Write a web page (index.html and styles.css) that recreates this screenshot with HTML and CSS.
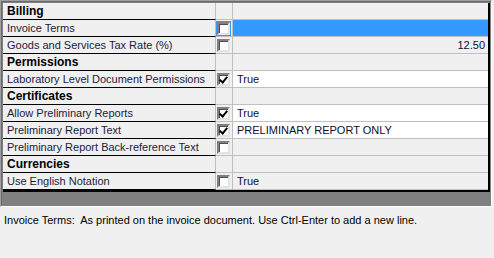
FILE: index.html
```html
<!DOCTYPE html>
<html lang="en">
<head>
    <meta charset="UTF-8">
    <title>Options</title>
    <link rel="stylesheet" href="styles.css">
</head>
<body>
    <div class="panel">
        <div class="grid">
            <div class="label head">Billing</div><div class="check"></div><div class="value"></div>

            <div class="label">Invoice Terms</div>
            <div class="check sel"><span class="box"></span></div>
            <div class="value selected"></div>

            <div class="label">Goods and Services Tax Rate (%)</div>
            <div class="check"><span class="box"></span></div>
            <div class="value num">12.50</div>

            <div class="label head">Permissions</div><div class="check"></div><div class="value"></div>

            <div class="label">Laboratory Level Document Permissions</div>
            <div class="check"><span class="box on"></span></div>
            <div class="value set">True</div>

            <div class="label head">Certificates</div><div class="check"></div><div class="value"></div>

            <div class="label">Allow Preliminary Reports</div>
            <div class="check"><span class="box on"></span></div>
            <div class="value set">True</div>

            <div class="label">Preliminary Report Text</div>
            <div class="check"><span class="box on"></span></div>
            <div class="value set">PRELIMINARY REPORT ONLY</div>

            <div class="label">Preliminary Report Back-reference Text</div>
            <div class="check"><span class="box"></span></div>
            <div class="value"></div>

            <div class="label head">Currencies</div><div class="check"></div><div class="value"></div>

            <div class="label">Use English Notation</div>
            <div class="check"><span class="box"></span></div>
            <div class="value">True</div>
        </div>
    </div>
    <div class="status">Invoice Terms:&nbsp; As printed on the invoice document. Use Ctrl-Enter to add a new line.</div>
</body>
</html>
```

FILE: styles.css
```css
body {
    margin: 0;
    background-color: #f0f0f0;
    font-family: 'Liberation Sans', Arial, sans-serif;
    font-size: 11px;
    color: #000;
}
.panel {
    width: 488px;
    height: 203px;
    background-color: #808080;
    border-top: 1px solid #a0a0a0;
    border-left: 1px solid #a0a0a0;
    border-right: 1px solid #fff;
    border-bottom: 1px solid #fff;
    box-shadow: inset 1px 1px 0 #696969;
    padding: 2px 0 0 2px;
    box-sizing: content-box;
}
.grid {
    display: grid;
    grid-template-columns: 213px 17px 1fr;
    grid-auto-rows: 17px;
    width: 487px;
    background-color: #f0f0f0;
    border-right: 2px solid #000;
    border-bottom: 2px solid #000;
    box-sizing: border-box;
}
.label {
    display: flex;
    align-items: center;
    padding-left: 4px;
    color: #1b1b3a;
    border-bottom: 1px solid #000;
    border-right: 1px solid #c0c0c0;
    white-space: nowrap;
}
.label.head {
    font-weight: bold;
    font-size: 12px;
    color: #000;
}
.check {
    display: flex;
    align-items: center;
    padding-left: 1px;
    border-bottom: 1px solid #c0c0c0;
    border-right: 1px solid #c0c0c0;
}
.value {
    display: flex;
    align-items: center;
    padding-left: 4px;
    border-bottom: 1px solid #c0c0c0;
    color: #0e0e30;
}
.value.set {
    background-color: #fff;
}
.value.selected {
    background-color: #3399ff;
}
.value.num {
    justify-content: flex-end;
    padding-right: 3px;
}
.box {
    position: relative;
    width: 9px;
    height: 9px;
    background-color: #fff;
    border-top: 2px solid #808080;
    border-left: 2px solid #808080;
    border-right: 2px solid #e3e3e3;
    border-bottom: 2px solid #e3e3e3;
    box-shadow: inset 1px 1px 0 #505050;
}
.check.sel .box {
    outline: 1px solid #3399ff;
}
.box.on::after {
    content: "";
    position: absolute;
    left: 2px;
    top: 0px;
    width: 3px;
    height: 6px;
    border-right: 2px solid #000;
    border-bottom: 2px solid #000;
    transform: rotate(40deg);
}
.status {
    padding: 7px 0 0 4px;
    color: #000;
}
```
